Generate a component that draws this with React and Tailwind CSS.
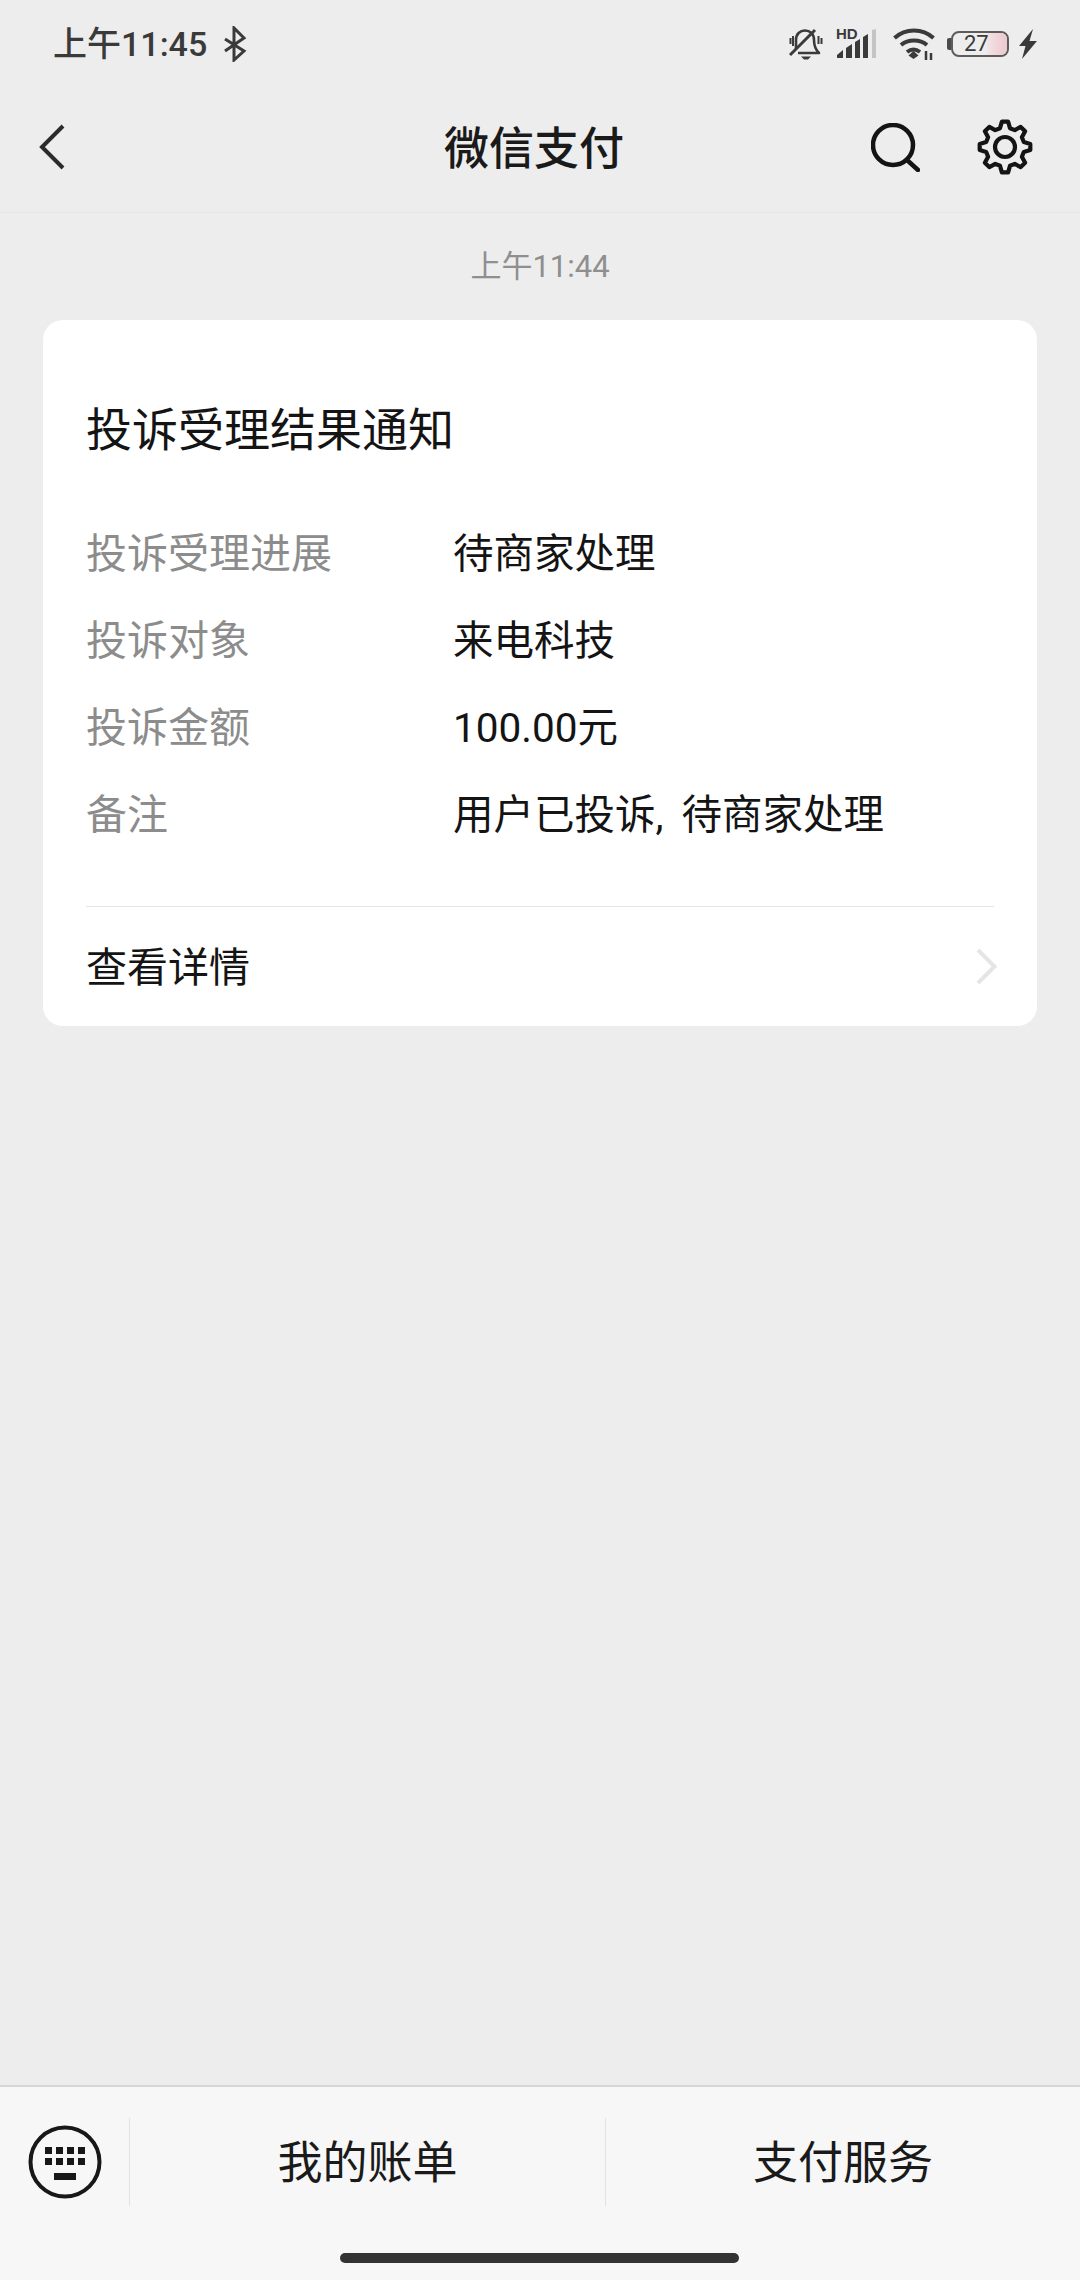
import React from 'react';

const font = "font-['Roboto','Noto_Sans_CJK_SC',sans-serif]";

const rows = [
  ['投诉受理进展', '待商家处理'],
  ['投诉对象', '来电科技'],
  ['投诉金额', '100.00元'],
  ['备注', '用户已投诉, 待商家处理'],
];

// 8 toothed gear outline, tooth pointing up first
const gearPath = () => {
  const pt = (deg, r) => {
    const a = (deg * Math.PI) / 180;
    return `${(28 + r * Math.cos(a)).toFixed(1)} ${(28 + r * Math.sin(a)).toFixed(1)}`;
  };
  let d = '';
  for (let i = 0; i < 8; i++) {
    const c = i * 45 - 90;
    d += `${i === 0 ? 'M' : 'L'}${pt(c - 15, 19.5)} L${pt(c - 7, 25.5)} L${pt(c + 7, 25.5)} L${pt(c + 15, 19.5)} `;
  }
  return d + 'Z';
};

const StatusIcons = () => (
  <div className="flex items-center">
    <svg width="34" height="32" viewBox="0 0 34 32" fill="none" stroke="#3a3a3a" strokeWidth="2.6">
      <path d="M7 21V12C7 6 11 2.500 16 2.500S25 6 25 12c0 6 1 9 5 13H9" strokeLinejoin="round" />
      <path d="M1 27 26 2" strokeWidth="3" />
      <path d="M1.500 10v6M4 8v10M29.500 8v8M32.500 10v6" strokeWidth="2" />
      <path d="M12 28.500h10l-3 3h-4z" fill="#3a3a3a" stroke="none" />
    </svg>
    <div className="relative ml-[13px] w-[42px] h-[32px]">
      <span className="absolute left-0 top-[-1px] text-[15px] leading-[14px] font-bold text-[#3a3a3a] font-['Liberation_Sans',sans-serif]">HD</span>
      <svg className="absolute left-0 top-0" width="42" height="32" viewBox="0 0 42 32" fill="#3a3a3a">
        <path d="M1 30v-3l6-5v8zM10 30V20l6-4v14zM19 30V14l5-3v19zM27 30V9l5-3v24z" />
        <path d="M36 30V2l4-1v29z" fill="#c4c4c4" />
      </svg>
    </div>
    <svg className="ml-[15px]" width="42" height="34" viewBox="0 0 42 34" fill="none" stroke="#3a3a3a" strokeWidth="4">
      <path d="M1.500 11c11-10 28-10 39 0" />
      <path d="M8 18c7-6 19-6 26 0" />
      <path d="M14 25c4-3 9-3 13 0" />
      <path d="M20.500 24l5 4.500-5 3.500-5-3.500z" fill="#3a3a3a" stroke="none" />
      <path d="M33 24v9M38 26v7" strokeWidth="2.500" />
    </svg>
    <div className="ml-[12px] flex items-center">
      <div className="w-[4px] h-[12px] rounded-l-[2px] bg-[#4a4a4a]"></div>
      <div className="relative w-[58px] h-[26px] flex items-center rounded-[8px] border-2 border-[#5c5c5c] overflow-hidden">
        <div className="absolute right-0 top-0 bottom-0 w-[20px] bg-gradient-to-r from-[#f3e4e4] via-[#efd5d8] to-[#ecc9ce]"></div>
        <span className="relative ml-[11px] text-[22px] leading-none text-[#3a3a3a]">27</span>
      </div>
    </div>
    <svg className="ml-[9px]" width="20" height="30" viewBox="0 0 20 30" fill="#3a3a3a">
      <path d="M15 0 1 17h6.500L4 30l15-18h-7.500z" />
    </svg>
  </div>
);

export default function App() {
  return (
    <div className={`w-[1080px] h-[2280px] bg-[#ededed] flex flex-col ${font}`}>
      <div className="h-[88px] flex items-center justify-between pl-[53px] pr-[42px]">
        <div className="flex items-center">
          <span className="text-[34px] leading-none font-medium text-[#3a3a3a]">上午11:45</span>
          <svg className="ml-[16px]" width="24" height="36" viewBox="0 0 24 36" fill="none" stroke="#3a3a3a" strokeWidth="3">
            <path d="M2 13 21 25 11 34V2l10 10L2 25" />
          </svg>
        </div>
        <StatusIcons />
      </div>

      <div className="h-[125px] flex items-center border-b border-[#e6e6e6] pl-[39px] pr-[47px] pb-[6px]">
        <svg width="26" height="46" viewBox="0 0 26 46" fill="none" stroke="#2b2b2b" strokeWidth="4">
          <path d="M24 2 3 23l21 21" />
        </svg>
        <span className="ml-[379px] mt-[6px] text-[45px] leading-[58px] font-medium text-[#1a1a1a]">微信支付</span>
        <div className="ml-auto flex items-center gap-[57px]">
          <svg width="49" height="49" viewBox="0 0 49 49" fill="none" stroke="#141414" strokeWidth="4.500">
            <circle cx="22" cy="22" r="20" />
            <path d="m36 37 11 10" strokeLinecap="round" />
          </svg>
          <svg width="56" height="56" viewBox="0 0 56 56" fill="none" stroke="#141414" strokeWidth="4.200" strokeLinejoin="round">
            <circle cx="28" cy="28" r="10" />
            <path d={gearPath()} />
          </svg>
        </div>
      </div>

      <div className="flex-1 flex flex-col px-[43px]">
        <div className="text-center text-[31px] leading-[40px] text-[#8f8f8f] mt-[34px]">上午11:44</div>
        <div className="mt-[33px] bg-white rounded-[20px] pt-[80px] px-[43px] h-[706px] flex flex-col">
          <div className="text-[46px] leading-[60px] text-[#141414]">投诉受理结果通知</div>
          <div className="mt-[64px] flex flex-col gap-[27px]">
            {rows.map(([k, v]) => (
              <div key={k} className="flex leading-[60px]">
                <span className="w-[367px] text-[41px] text-[#8c8c8c]">{k}</span>
                <span className="text-[40.500px] text-[#141414] [word-spacing:8px]">{v}</span>
              </div>
            ))}
          </div>
          <div className="mt-[61px] border-t border-[#e5e5e5] flex-1 flex items-center justify-between">
            <span className="text-[41px] leading-[60px] text-[#141414] pt-[2px]">查看详情</span>
            <svg className="-mr-[3px]" width="21" height="37" viewBox="0 0 21 37" fill="none" stroke="#e5e5e5" strokeWidth="4">
              <path d="m2 2 16.500 16.500L2 35" />
            </svg>
          </div>
        </div>
      </div>

      <div className="h-[195px] bg-[#f7f7f7] border-t-2 border-[#d6d6d6] flex flex-col">
        <div className="flex items-center h-[88px] mt-[31px]">
          <div className="w-[130px] h-full flex items-center justify-center border-r border-[#e2e2e2]">
            <svg width="74" height="74" viewBox="0 0 74 74" fill="none">
              <circle cx="37" cy="37" r="34.500" stroke="#181818" strokeWidth="4" />
              <path fill="#181818" d="M17 22h7v7h-7zM28 22h7v7h-7zM39 22h7v7h-7zM50 22h7v7h-7zM17 33h7v7h-7zM28 33h7v7h-7zM39 33h7v7h-7zM50 33h7v7h-7zM26 48h22v7H26z" />
            </svg>
          </div>
          <div className="flex-1 text-center text-[45px] leading-[60px] text-[#1a1a1a] h-full flex items-center justify-center border-r border-[#e2e2e2] pt-[3px]">我的账单</div>
          <div className="w-[474px] text-center text-[45px] leading-[60px] text-[#1a1a1a] pt-[3px]">支付服务</div>
        </div>
        <div className="mt-[47px] ml-[340px] w-[399px] h-[10px] rounded-full bg-[#333333]"></div>
      </div>
    </div>
  );
}
